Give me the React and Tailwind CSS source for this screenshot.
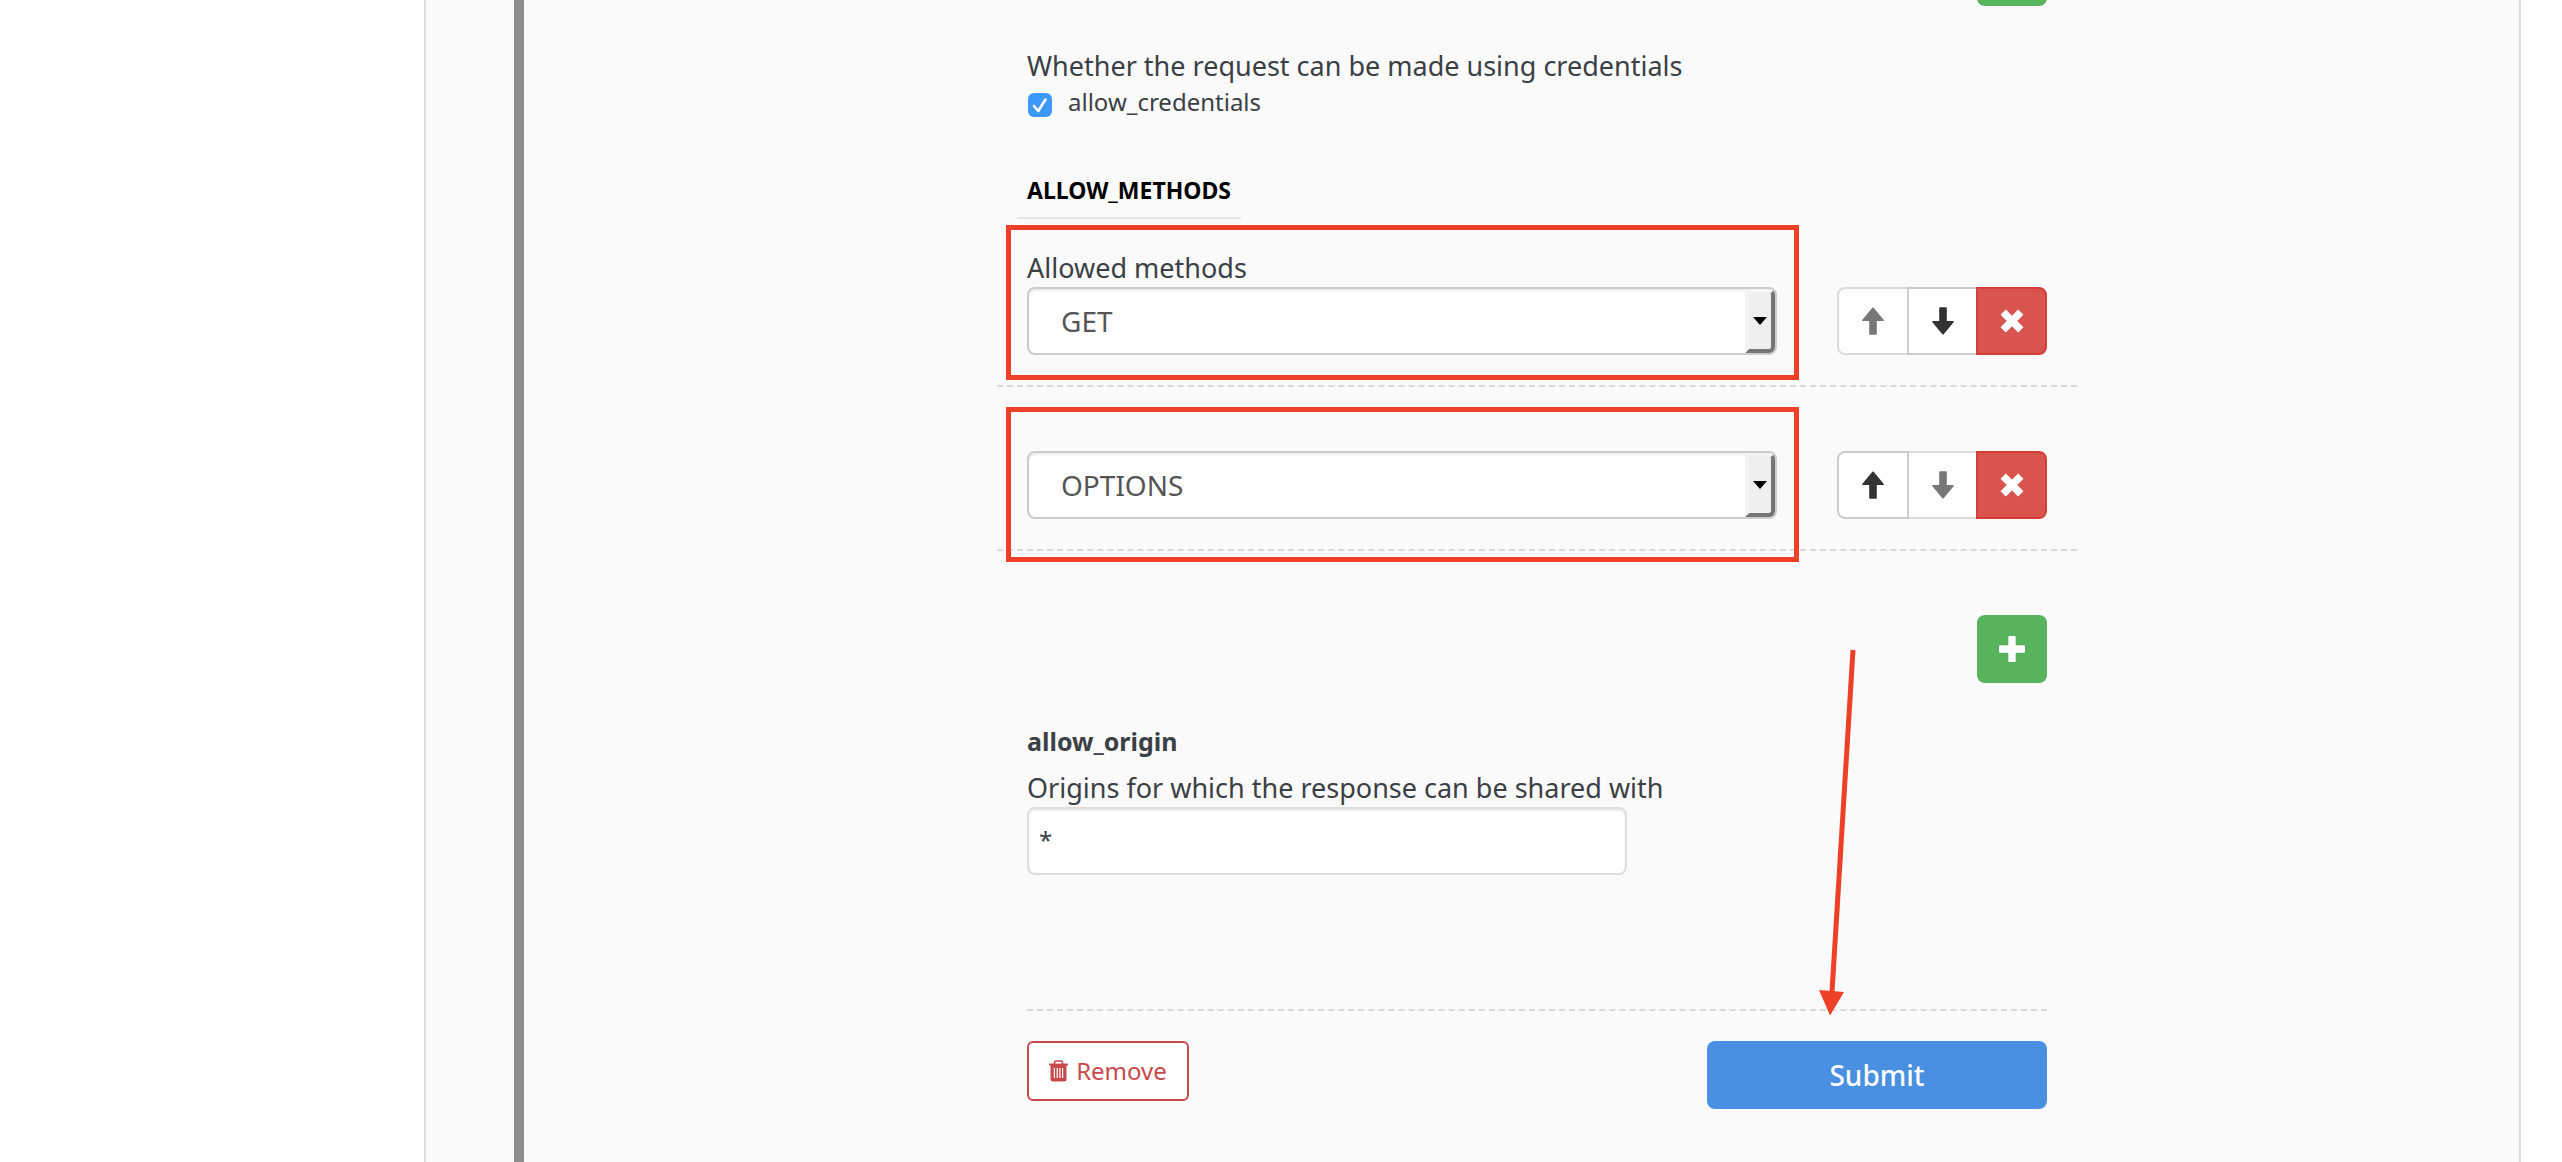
function ArrowIcon({ down }) {
  return (
    <svg viewBox="0 0 22 28" className="h-7 w-[22px]" fill="currentColor" aria-hidden="true">
      <path
        transform={down ? "rotate(180 11 14)" : undefined}
        d="M10.300.8Q11 .2 11.700.8L21.800 13.100q.5.9-.5.9H14.800v12.800q0 .9-.9.900H8.100q-.9 0-.9-.9V14H.7q-1 0-.5-.9z"
      />
    </svg>
  );
}

function CrossIcon() {
  return (
    <svg viewBox="0 0 24 24" className="size-6" fill="none" stroke="currentColor" strokeWidth="7.500" strokeLinejoin="round" aria-hidden="true">
      <path d="M3.200 3.200l17.600 17.600M20.800 3.200L3.200 20.800" />
    </svg>
  );
}

function PlusIcon() {
  return (
    <svg viewBox="0 0 26 26" className="size-[26px]" fill="currentColor" aria-hidden="true">
      <rect x="9.300" y="0" width="7.400" height="26" rx="1" />
      <rect x="0" y="9.300" width="26" height="7.400" rx="1" />
    </svg>
  );
}

function TrashIcon() {
  return (
    <svg viewBox="0 0 19 22" className="h-[22px] w-[19px]" fill="none" stroke="currentColor" aria-hidden="true">
      <path d="M5.500 4V2.800Q5.500 1 7.300 1h4.400q1.800 0 1.800 1.800V4" strokeWidth="1.600" />
      <path d="M0 4.500h19" strokeWidth="1.800" />
      <path
        fill="currentColor"
        stroke="none"
        fillRule="evenodd"
        d="M1.500 5h16v14q0 2.500-2.500 2.500H4q-2.500 0-2.500-2.500zM4.800 8v10h1.200V8zM7.600 8v10h1.200V8zM10.300 8v10h1.200V8zM13 8v10h1.200V8z"
      />
    </svg>
  );
}

function DashedLine() {
  return <hr className="border-t-2 border-dashed border-[#dadada]" />;
}

function AddButton({ label }) {
  return (
    <button
      type="button"
      aria-label={label}
      className="flex h-[68px] w-[70px] items-center justify-center self-end rounded-lg bg-[#57b35e] text-white"
    >
      <PlusIcon />
    </button>
  );
}

function MethodSelect({ id, value, label }) {
  return (
    <div className="relative">
      <select
        id={id}
        aria-label={label}
        defaultValue={value}
        className="block h-[68px] w-full appearance-none rounded-lg border-2 border-[#ccc] bg-white pl-8 pr-10 text-[28px] text-[#555] shadow-[inset_0_2px_2px_rgba(0,0,0,0.075)]"
      >
        <option>GET</option>
        <option>OPTIONS</option>
        <option>POST</option>
        <option>PUT</option>
        <option>DELETE</option>
      </select>
      <span className="pointer-events-none absolute inset-y-0.5 right-0.5 flex w-[30px] items-center justify-center rounded-r-md border-4 border-b-[#767676] border-l-[#f3f3f3] border-r-[#767676] border-t-[#f3f3f3] bg-[#efefef]">
        <svg viewBox="0 0 14 8" className="h-2 w-3.5" aria-hidden="true">
          <path d="M0 0h14L7 8z" fill="#000" />
        </svg>
      </span>
    </div>
  );
}

function MoveButtons({ first, last }) {
  return (
    <div className="flex text-[#333]">
      <button
        type="button"
        aria-label="Move up"
        disabled={first}
        className="flex h-[68px] w-[72px] items-center justify-center rounded-l-lg border-2 border-[#ccc] bg-white disabled:opacity-65"
      >
        <ArrowIcon />
      </button>
      <button
        type="button"
        aria-label="Move down"
        disabled={last}
        className="-ml-0.5 flex h-[68px] w-[71px] items-center justify-center border-2 border-[#ccc] bg-white disabled:opacity-65"
      >
        <ArrowIcon down />
      </button>
      <button
        type="button"
        aria-label="Delete"
        className="relative -ml-0.5 flex h-[68px] w-[71px] items-center justify-center rounded-r-lg border-2 border-[#d43f3a] bg-[#d9534f] text-white"
      >
        <CrossIcon />
      </button>
    </div>
  );
}

export default function App() {
  return (
    <div className="flex min-h-screen overflow-hidden bg-white font-['Noto_Sans','Open_Sans',sans-serif] text-[#3b4045]">
      <aside className="w-[424px] shrink-0" />
      <main className="mr-[41px] flex flex-1 border-x-2 border-[#ddd] bg-[#fafafa] pl-[88px]">
        <div className="flex flex-1 border-l-[10px] border-[#8b8d8f] pl-[503px] pr-[472px]">
          <form className="relative -mt-[62px] flex flex-1 flex-col self-start" onSubmit={(e) => e.preventDefault()}>
            <AddButton label="Add header" />

            <p className="mt-11 text-[27px] leading-8">Whether the request can be made using credentials</p>
            <label className="mt-0.5 flex items-start gap-4 pl-px text-2xl leading-9">
              <span className="relative mt-[9px] size-6">
                <input type="checkbox" defaultChecked className="peer block size-6 appearance-none rounded-md bg-[#3b99fc]" />
                <svg viewBox="0 0 24 24" className="pointer-events-none absolute inset-0 hidden size-6 peer-checked:block" aria-hidden="true">
                  <path d="M6 13l4.200 5L17.500 6.500" fill="none" stroke="#fff" strokeWidth="2.600" strokeLinecap="round" strokeLinejoin="round" />
                </svg>
              </span>
              allow_credentials
            </label>

            <h2 className="-ml-2.5 mt-[54px] w-fit border-b-2 border-[#e5e5e5] px-2.5 pb-[11px] text-[23px] font-bold leading-8 text-black">
              ALLOW_METHODS
            </h2>

            <div className="-mx-[30px]">
              <div className="flex items-end justify-between px-[30px] pb-[30px] pt-[33px]">
                <div className="relative w-[750px]">
                  <label htmlFor="method-1" className="mb-[3px] block text-[27px] leading-8">
                    Allowed methods
                  </label>
                  <MethodSelect id="method-1" value="GET" />
                  <span className="pointer-events-none absolute -bottom-[25px] -left-[21px] -right-[22px] h-[155px] border-[5px] border-[#ed4026]" />
                </div>
                <MoveButtons first />
              </div>
              <DashedLine />
            </div>

            <div className="-mx-[30px]">
              <div className="flex items-end justify-between px-[30px] pb-[30px] pt-16">
                <div className="relative w-[750px]">
                  <MethodSelect id="method-2" value="OPTIONS" label="Allowed methods, second entry" />
                  <span className="pointer-events-none absolute -bottom-[43px] -left-[21px] -right-[22px] z-10 h-[155px] border-[5px] border-[#ed4026]" />
                </div>
                <MoveButtons last />
              </div>
              <DashedLine />
            </div>

            <div className="mt-16 flex flex-col">
              <AddButton label="Add method" />
            </div>

            <label htmlFor="allow-origin" className="mt-[42px] text-[25px] font-bold leading-8">
              allow_origin
            </label>
            <p className="mt-[15px] text-[27px] leading-8">Origins for which the response can be shared with</p>
            <input
              id="allow-origin"
              type="text"
              defaultValue="*"
              className="mt-[3px] h-[68px] w-[600px] rounded-lg border-2 border-[#ddd] bg-white px-2.5 pb-1 text-2xl shadow-[inset_0_2px_2px_rgba(0,0,0,0.075)]"
            />

            <div className="mt-[134px]">
              <DashedLine />
              <div className="mt-[30px] flex items-start justify-between">
                <button
                  type="button"
                  className="flex h-[60px] w-[162px] items-center justify-center gap-2 rounded-md border-2 border-[#c9494b] bg-white text-2xl text-[#c9494b]"
                >
                  <TrashIcon />
                  Remove
                </button>
                <button type="submit" className="h-[68px] w-[340px] rounded-lg bg-[#4990e2] text-[28px] font-medium text-white">
                  Submit
                </button>
              </div>
            </div>

            <svg viewBox="0 0 45 370" className="pointer-events-none absolute bottom-[93px] right-[187px] h-[370px] w-[45px]" aria-hidden="true">
              <path d="M38 4L17 346" stroke="#ed4026" strokeWidth="5" />
              <path d="M4 344l25 2-14 23.500z" fill="#ed4026" />
            </svg>
          </form>
        </div>
      </main>
    </div>
  );
}
